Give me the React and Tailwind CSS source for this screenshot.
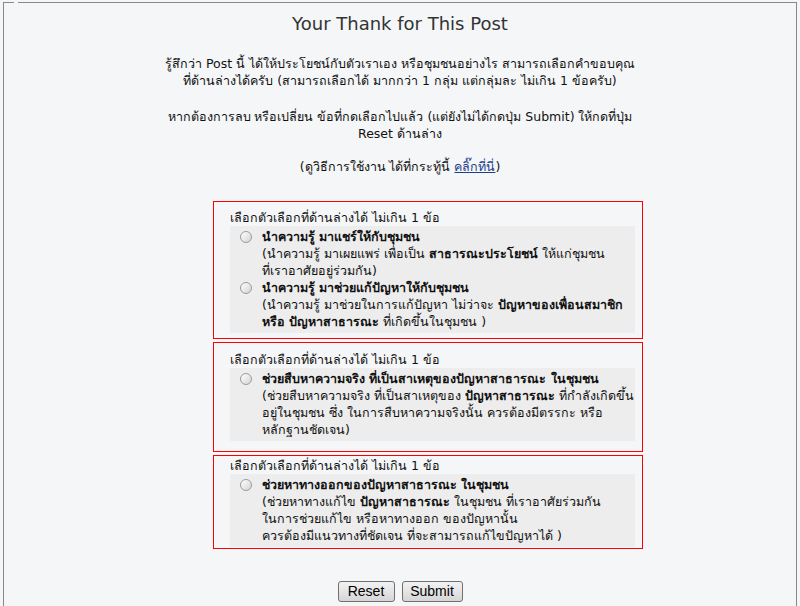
const Radio = () => (
  <span className="mt-[3px] mr-[10px] block h-[12px] w-[12px] shrink-0 rounded-full border border-[#9a9a9a] bg-gradient-to-br from-white to-[#d4d4d4]" />
);

const Option = ({ title, children }) => (
  <div className="flex pl-[10px]">
    <Radio />
    <div className="whitespace-nowrap">
      <div className="font-bold">{title}</div>
      <div>{children}</div>
    </div>
  </div>
);

const Group = ({ box, children }) => (
  <div className={`ml-[209px] w-[430px] border border-[#ff0000] pl-[16px] pr-[7px] ${box}`}>
    <div className="whitespace-nowrap">เลือกตัวเลือกที่ด้านล่างได้ ไม่เกิน 1 ข้อ</div>
    <div className="bg-[#ededed] pt-[2px] pb-[3px]">{children}</div>
  </div>
);

const App = () => {
  return (
    <div
      className="min-h-[606px] overflow-hidden bg-[#f5f6f8] px-[3px] pt-[2px] text-[12.5px] leading-[17px] text-[#111]"
      style={{ fontFamily: 'Tahoma, "DejaVu Sans", "Noto Sans", sans-serif' }}
    >
      <fieldset className="h-[640px] border border-[#888888] pt-[9px]">
        <legend className="ml-[10px] h-0 w-[4px]"></legend>
        <h1 className="text-center text-[18px] leading-[24px] text-[#333]">Your Thank for This Post</h1>

        <p className="mt-[19px] whitespace-nowrap text-center">
          รู้สึกว่า Post นี้ ได้ให้ประโยชน์กับตัวเราเอง หรือชุมชนอย่างไร สามารถเลือกคำขอบคุณ
          <br />
          ที่ด้านล่างได้ครับ (สามารถเลือกได้ มากกว่า 1 กลุ่ม แต่กลุ่มละ ไม่เกิน 1 ข้อครับ)
        </p>

        <p className="mt-[19px] whitespace-nowrap text-center">
          หากต้องการลบ หรือเปลี่ยน ข้อที่กดเลือกไปแล้ว (แต่ยังไม่ได้กดปุ่ม Submit) ให้กดที่ปุ่ม
          <br />
          Reset ด้านล่าง
        </p>

        <p className="mt-[16px] text-center">
          (ดูวิธีการใช้งาน ได้ที่กระทู้นี้ <a className="text-[#1c3f8c] underline">คลิ๊กที่นี่</a>)
        </p>

        <div className="mt-[26px] flex flex-col">
          <Group box="pt-[7px] pb-[5px]">
            <Option title="นำความรู้ มาแชร์ให้กับชุมชน">
              (นำความรู้ มาเผยแพร่ เพื่อเป็น <b>สาธารณะประโยชน์</b> ให้แก่ชุมชน
              <br />
              ที่เราอาศัยอยู่ร่วมกัน)
            </Option>
            <Option title="นำความรู้ มาช่วยแก้ปัญหาให้กับชุมชน">
              (นำความรู้ มาช่วยในการแก้ปัญหา ไม่ว่าจะ <b>ปัญหาของเพื่อนสมาชิก</b>
              <br />
              <b>หรือ ปัญหาสาธารณะ</b> ที่เกิดขึ้นในชุมชน )
            </Option>
          </Group>

          <Group box="mt-[3px] pt-[8px] pb-[10px]">
            <Option title="ช่วยสืบหาความจริง ที่เป็นสาเหตุของปัญหาสาธารณะ ในชุมชน">
              (ช่วยสืบหาความจริง ที่เป็นสาเหตุของ <b>ปัญหาสาธารณะ</b> ที่กำลังเกิดขึ้น
              <br />
              อยู่ในชุมชน ซึ่ง ในการสืบหาความจริงนั้น ควรต้องมีตรรกะ หรือ
              <br />
              หลักฐานชัดเจน)
            </Option>
          </Group>

          <Group box="mt-[3px] pt-[1px] pb-[1px]">
            <Option title="ช่วยหาทางออกของปัญหาสาธารณะ ในชุมชน">
              (ช่วยหาทางแก้ไข <b>ปัญหาสาธารณะ</b> ในชุมชน ที่เราอาศัยร่วมกัน
              <br />
              ในการช่วยแก้ไข หรือหาทางออก ของปัญหานั้น
              <br />
              ควรต้องมีแนวทางที่ชัดเจน ที่จะสามารถแก้ไขปัญหาได้ )
            </Option>
          </Group>
        </div>

        <div
          className="mt-[32px] flex justify-center gap-[7px] text-[14px] text-black"
          style={{ fontFamily: '"Liberation Sans", Arial, sans-serif' }}
        >
          <button className="h-[21px] w-[57px] rounded-[3px] border border-[#707070] bg-gradient-to-b from-[#f2f2f2] to-[#d6d6d6] leading-[19px]">
            Reset
          </button>
          <button className="h-[21px] w-[61px] rounded-[3px] border border-[#707070] bg-gradient-to-b from-[#f2f2f2] to-[#d6d6d6] leading-[19px]">
            Submit
          </button>
        </div>
      </fieldset>
    </div>
  );
};

export default App;
